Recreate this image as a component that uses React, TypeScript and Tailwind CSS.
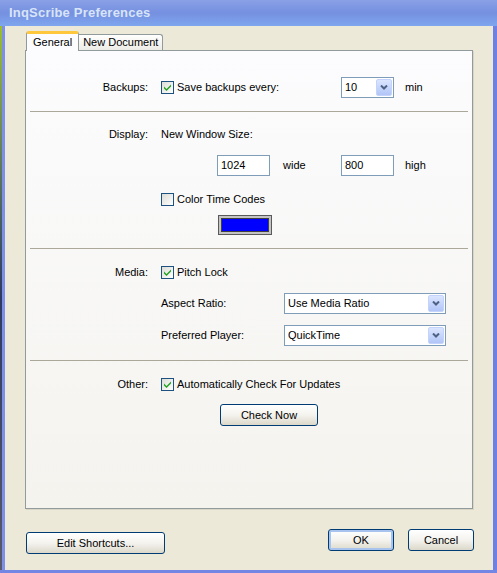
import { ReactNode } from "react";

function Check({ checked }: { checked?: boolean }) {
  return (
    <span className="w-[13px] h-[13px] shrink-0 border border-[#1c5180] bg-gradient-to-br from-[#dcdcd7] to-white flex items-center justify-center">
      {checked && (
        <svg width="7" height="7" viewBox="0 0 7 7">
          <path d="M0 2.5 L2.5 5 L7 0.5 V2.5 L2.5 7 L0 4.5 Z" fill="#21a121" />
        </svg>
      )}
    </span>
  );
}

function Combo({ value, width }: { value: string; width: string }) {
  return (
    <div
      className={`${width} h-[21px] border border-[#7f9db9] bg-white p-[1px] flex items-stretch shrink-0`}
    >
      <span className="flex-1 pl-[2px] flex items-center">{value}</span>
      <span className="w-[16px] rounded-[2px] border border-[#c3d3fd] bg-gradient-to-b from-[#dbe5fe] to-[#b1c5f7] flex items-center justify-center">
        <svg width="8" height="5" viewBox="0 0 8 5">
          <path d="M1 0.5 L4 3.5 L7 0.5" fill="none" stroke="#4d6185" strokeWidth="2" />
        </svg>
      </span>
    </div>
  );
}

function Field({ value }: { value: string }) {
  return (
    <div className="w-[53px] h-[21px] border border-[#7f9db9] bg-white pl-[3px] flex items-center shrink-0">
      {value}
    </div>
  );
}

function Button({ children, className, primary }: { children: ReactNode; className: string; primary?: boolean }) {
  return (
    <button
      className={`h-[22px] rounded-[3px] border border-[#003c74] bg-gradient-to-b from-white via-[#f4f3ee] to-[#dcd8ca] text-black flex items-center justify-center ${
        primary ? "shadow-[inset_0_0_0_2px_#a8c4ee]" : ""
      } ${className}`}
    >
      {children}
    </button>
  );
}

function Row({ label, children, className = "h-[14px]" }: { label?: string; children: ReactNode; className?: string }) {
  return (
    <div className={`flex items-center ${className}`}>
      <span className="w-[123px] text-right pr-[1px]">{label}</span>
      <div className="ml-[12px] flex items-center">{children}</div>
    </div>
  );
}

function Separator({ className }: { className: string }) {
  return <div className={`mx-[4px] h-px bg-[#aca899] ${className}`} />;
}

export default function App() {
  return (
    <div className="w-[497px] h-[573px] bg-[#7b8fe2] flex flex-col text-[11px] text-black font-['Liberation_Sans',Arial,sans-serif] overflow-hidden">
      <div className="h-[26px] shrink-0 bg-gradient-to-b from-[#8aa0e6] via-[#7590e0] to-[#7fa6ef] flex items-center pl-[9px] pb-[1px]">
        <span className="text-[13px] font-bold text-[#d8e4f8] tracking-[0.2px]">InqScribe Preferences</span>
      </div>
      <div className="flex-1 flex">
        <div className="w-[2px] bg-gradient-to-b from-[#9bbf2a] via-[#2e3a62] to-[#5a5a6a]" />
        <div className="w-[3px] bg-[#7d8fe6]" />
        <div className="w-[488px] bg-[#ece9d8] flex flex-col">
          <div className="flex items-end h-[19px] mt-[5px] ml-[21px]">
            <div className="relative z-10 h-[20px] translate-y-[1px] px-[6px] bg-[#fcfcfe] border-x border-[#919b9c] rounded-t-[3px] border-t-[3px] border-t-[#ffc83c] flex items-center">
              General
            </div>
            <div className="h-[16px] px-[4px] border-t border-r border-[#919b9c] rounded-tr-[3px] bg-gradient-to-b from-white to-[#ecebe6] flex items-center">
              New Document
            </div>
          </div>
          <div className="ml-[20px] w-[448px] h-[459px] border border-[#919b9c] bg-gradient-to-b from-[#fcfcfe] to-[#f4f3ee] shadow-[1px_1px_0_#d9d6c7] flex flex-col">
            <Row label="Backups:" className="h-[21px] mt-[26px]">
              <div className="w-[180px] flex items-center">
                <Check checked />
                <span className="ml-[3px]">Save backups every:</span>
              </div>
              <Combo value="10" width="w-[53px]" />
              <span className="ml-[11px]">min</span>
            </Row>
            <Separator className="mt-[13px]" />

            <Row label="Display:" className="h-[14px] mt-[15px]">
              <span>New Window Size:</span>
            </Row>
            <Row className="h-[21px] mt-[14px]">
              <div className="ml-[56px] flex items-center">
                <Field value="1024" />
                <span className="w-[71px] pl-[13px]">wide</span>
                <Field value="800" />
                <span className="ml-[11px]">high</span>
              </div>
            </Row>
            <Row className="h-[14px] mt-[16px]">
              <Check />
              <span className="ml-[3px]">Color Time Codes</span>
            </Row>
            <Row className="h-[20px] mt-[9px]">
              <div className="ml-[57px] w-[54px] h-[20px] border border-[#5a5a5a] bg-[#c4c4c4] p-[2px] flex">
                <div className="flex-1 border border-[#404040] bg-[#0000ff]" />
              </div>
            </Row>
            <Separator className="mt-[13px]" />

            <Row label="Media:" className="h-[14px] mt-[16px]">
              <Check checked />
              <span className="ml-[3px]">Pitch Lock</span>
            </Row>
            <Row className="h-[21px] mt-[14px]">
              <span className="w-[123px]">Aspect Ratio:</span>
              <Combo value="Use Media Ratio" width="w-[162px]" />
            </Row>
            <Row className="h-[21px] mt-[11px]">
              <span className="w-[123px]">Preferred Player:</span>
              <Combo value="QuickTime" width="w-[162px]" />
            </Row>
            <Separator className="mt-[14px]" />

            <Row label="Other:" className="h-[14px] mt-[16px]">
              <Check checked />
              <span className="ml-[3px]">Automatically Check For Updates</span>
            </Row>
            <Row className="h-[22px] mt-[13px]">
              <Button className="ml-[59px] w-[98px]">Check Now</Button>
            </Row>
          </div>
          <div className="flex items-start mt-[20px] ml-[21px]">
            <Button className="mt-[3px] w-[139px]">Edit Shortcuts...</Button>
            <Button primary className="ml-[163px] w-[66px]">OK</Button>
            <Button className="ml-[14px] w-[66px]">Cancel</Button>
          </div>
        </div>
        <div className="w-[4px] bg-[#6f80e2]" />
      </div>
      <div className="h-[3px] bg-[#7386e4]" />
    </div>
  );
}
